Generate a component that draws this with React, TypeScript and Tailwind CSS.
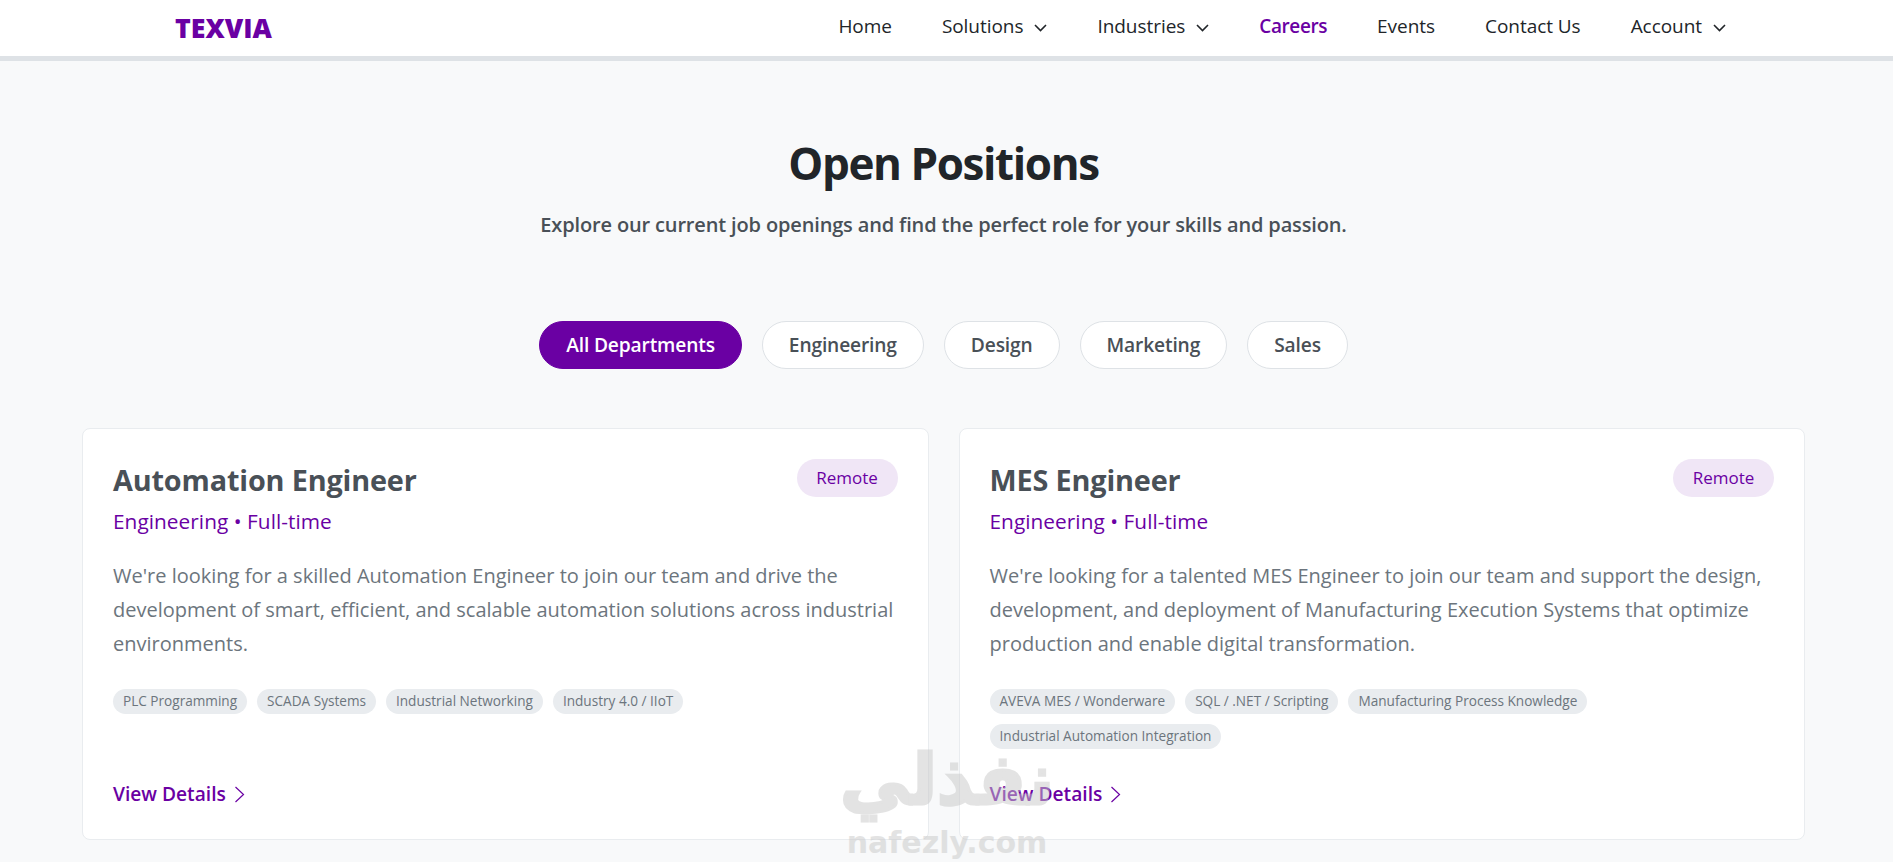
type Job = {
  title: string;
  description: string;
  tags: string[];
};

const navItems = [
  { label: "Home" },
  { label: "Solutions", menu: true },
  { label: "Industries", menu: true },
  { label: "Careers", active: true },
  { label: "Events" },
  { label: "Contact Us" },
  { label: "Account", menu: true },
];

const filters = ["All Departments", "Engineering", "Design", "Marketing", "Sales"];

const jobs: Job[] = [
  {
    title: "Automation Engineer",
    description:
      "We're looking for a skilled Automation Engineer to join our team and drive the development of smart, efficient, and scalable automation solutions across industrial environments.",
    tags: ["PLC Programming", "SCADA Systems", "Industrial Networking", "Industry 4.0 / IIoT"],
  },
  {
    title: "MES Engineer",
    description:
      "We're looking for a talented MES Engineer to join our team and support the design, development, and deployment of Manufacturing Execution Systems that optimize production and enable digital transformation.",
    tags: [
      "AVEVA MES / Wonderware",
      "SQL / .NET / Scripting",
      "Manufacturing Process Knowledge",
      "Industrial Automation Integration",
    ],
  },
];

const NavChevron = () => (
  <svg width="13" height="8" viewBox="0 0 13 8" fill="none" stroke="currentColor" strokeWidth="1.6" className="mt-[3px]">
    <path d="M1 1l5.5 5.5L12 1" />
  </svg>
);

const JobCard = ({ title, description, tags }: Job) => {
  return (
    <div className="flex h-[412px] flex-col rounded-lg border border-[#e9ecef] bg-white px-[30px] pt-[30px] pb-[30px]">
      <div className="flex items-start justify-between">
        <h3 className="pt-[2px] text-[28.8px] leading-[38px] font-bold tracking-[-0.15px] text-[#495057]">{title}</h3>
        <span className="flex h-[38px] w-[101px] items-center justify-center rounded-full bg-[#f0e6f6] text-[17px] font-medium text-[#6a00a3]">
          Remote
        </span>
      </div>
      <p className="mt-[7px] text-[20.8px] leading-[30px] font-medium tracking-[0.05px] text-[#6a00a3]">
        Engineering • Full-time
      </p>
      <p className="mt-[23px] text-[20px] leading-[34px] text-[#6c757d]">{description}</p>
      <div className="mt-[28px] flex flex-wrap gap-[10px]">
        {tags.map((tag) => (
          <span
            key={tag}
            className="flex h-[25px] items-center rounded-full bg-[#e9ecef] px-[10px] text-[13.6px] text-[#6c757d]"
          >
            {tag}
          </span>
        ))}
      </div>
      <a className="mt-auto flex items-center gap-[8px] text-[19.2px] font-semibold text-[#6a00a3]">
        View Details
        <svg width="11" height="17" viewBox="0 0 11 17" fill="none" stroke="currentColor" strokeWidth="1.2">
          <path d="M1.5 1l8 7.5-8 7.5" />
        </svg>
      </a>
    </div>
  );
};

export default function App() {
  return (
    <div className="relative h-screen overflow-hidden bg-[#f8f9fa] font-['Open_Sans',sans-serif]">
      <header className="flex h-[61px] items-start justify-between border-b-[5px] border-[#dee2e6] bg-white pr-[167px] pl-[175px]">
        <span className="pt-[10px] text-[26.7px] leading-[36px] font-extrabold text-[#6a00a3]">TEXVIA</span>
        <nav className="flex h-[52px] items-center gap-[50px]">
          {navItems.map((item) => (
            <a
              key={item.label}
              className={`flex items-center gap-[11px] text-[19px] ${
                item.active ? "font-semibold tracking-[-0.4px] text-[#6a00a3]" : "tracking-[-0.05px] text-[#212529]"
              }`}
            >
              {item.label}
              {item.menu && <NavChevron />}
            </a>
          ))}
        </nav>
      </header>

      <main className="pr-[88px] pl-[82px]">
        <section className="flex flex-col items-center">
          <h2 className="mt-[75px] text-[44px] leading-[54px] font-bold tracking-[-1.4px] text-[#212529]">
            Open Positions
          </h2>
          <p className="mt-[20px] text-[20px] leading-[30px] font-semibold tracking-[-0.15px] text-[#495057]">
            Explore our current job openings and find the perfect role for your skills and passion.
          </p>
          <div className="mt-[81px] flex gap-[20px]">
            {filters.map((filter, i) => (
              <button
                key={filter}
                className={`h-[48px] rounded-full border px-[26px] pt-[1px] text-[19.2px] font-semibold tracking-[-0.15px] ${
                  i === 0
                    ? "border-[#6a00a3] bg-[#6a00a3] text-white"
                    : "border-[#dee2e6] bg-white text-[#495057]"
                }`}
              >
                {filter}
              </button>
            ))}
          </div>
        </section>

        <section className="mt-[59px] grid grid-cols-2 gap-[30px]">
          {jobs.map((job) => (
            <JobCard key={job.title} {...job} />
          ))}
        </section>
      </main>

      {/* site watermark */}
      <div className="pointer-events-none absolute top-[735px] left-[840px] flex w-[214px] flex-col items-center text-[#c8c8c8] opacity-50">
        <span className="font-['DejaVu_Sans',sans-serif] text-[70px] leading-[90px] font-bold [-webkit-text-stroke:3px_#c8c8c8]">
          نفذلي
        </span>
        <span className="font-['DejaVu_Sans',sans-serif] text-[30px] leading-[36px] font-bold">nafezly.com</span>
      </div>
    </div>
  );
}
